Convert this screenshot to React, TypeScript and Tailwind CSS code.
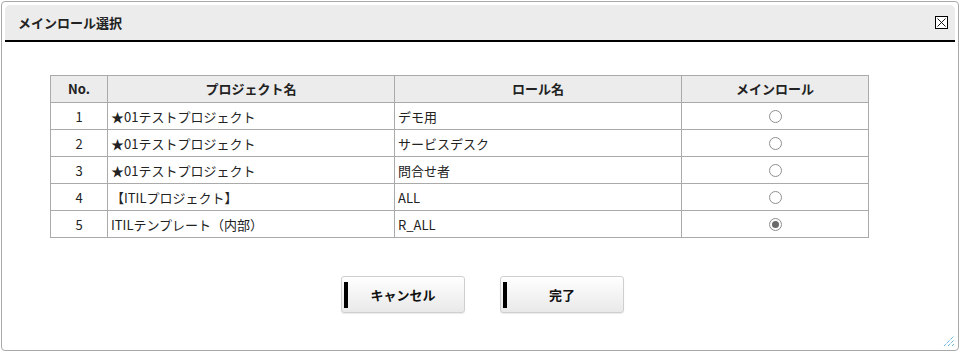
import React from "react";

const rows = [
  { no: 1, project: "★01テストプロジェクト", role: "デモ用", checked: false },
  { no: 2, project: "★01テストプロジェクト", role: "サービスデスク", checked: false },
  { no: 3, project: "★01テストプロジェクト", role: "問合せ者", checked: false },
  { no: 4, project: "【ITILプロジェクト】", role: "ALL", checked: false },
  { no: 5, project: "ITILテンプレート（内部）", role: "R_ALL", checked: true },
];

function Radio({ checked }: { checked: boolean }) {
  return (
    <span className="inline-flex w-[13px] h-[13px] rounded-full border border-[#8f8f8f] bg-white items-center justify-center align-middle">
      {checked && <span className="w-[7px] h-[7px] rounded-full bg-[#6b6b6b]" />}
    </span>
  );
}

function Btn({ label }: { label: string }) {
  return (
    <button className="relative w-[124px] h-[37px] rounded-[3px] border border-[#cfcfcf] bg-gradient-to-b from-[#ffffff] to-[#e9e9e9] text-[13px] font-bold text-[#111] shadow-[0_1px_1px_rgba(0,0,0,0.08)]">
      <span className="absolute left-[2px] top-[5px] w-[4px] h-[26px] bg-black" />
      {label}
    </button>
  );
}

export default function App() {
  return (
    <div
      className="w-[963px] h-[351px] bg-white pt-[1px] pl-[1px]"
      style={{ fontFamily: '"Noto Sans CJK JP", "Noto Sans", sans-serif' }}
    >
      <div className="w-[958px] h-[350px] border border-[#a9a9a9] rounded-[4px] bg-white p-[3px] flex flex-col relative">
        <div className="h-[37px] bg-[#ececec] rounded-t-[5px] border-b-2 border-black flex items-center justify-between pl-[13px] pr-[7px]">
          <span className="text-[13px] font-bold text-[#222] leading-none">メインロール選択</span>
          <span className="w-[13px] h-[13px] border border-black bg-white flex items-center justify-center">
            <svg width="11" height="11" viewBox="0 0 11 11">
              <path d="M1.5 1.5 L9.5 9.5 M9.5 1.5 L1.5 9.5" stroke="#000" strokeWidth="0.9" />
            </svg>
          </span>
        </div>

        <div className="pl-[45px] pt-[33px]">
          <table className="w-[819px] border-collapse text-[13px] text-[#222]">
            <thead>
              <tr className="h-[27px] bg-[#ececec]">
                <th className="w-[57px] border border-[#aaaaaa] font-bold">No.</th>
                <th className="w-[287px] border border-[#aaaaaa] font-bold">プロジェクト名</th>
                <th className="w-[287px] border border-[#aaaaaa] font-bold">ロール名</th>
                <th className="border border-[#aaaaaa] font-bold">メインロール</th>
              </tr>
            </thead>
            <tbody>
              {rows.map((r) => (
                <tr key={r.no} className="h-[27px]">
                  <td className="border border-[#aaaaaa] text-center leading-[25px] p-0">{r.no}</td>
                  <td className="border border-[#aaaaaa] pl-[3px] leading-[25px] p-0">{r.project}</td>
                  <td className="border border-[#aaaaaa] pl-[3px] leading-[25px] p-0">{r.role}</td>
                  <td className="border border-[#aaaaaa] text-center leading-none">
                    <Radio checked={r.checked} />
                  </td>
                </tr>
              ))}
            </tbody>
          </table>
        </div>

        <div className="flex justify-center gap-[35px] pt-[38px] pl-[5px]">
          <Btn label="キャンセル" />
          <Btn label="完了" />
        </div>

        <svg className="absolute right-[3px] bottom-[3px]" width="12" height="12" viewBox="0 0 12 12">
          <path d="M1 11 L11 1 M5 11 L11 5 M9 11 L11 9" stroke="#1d8fd6" strokeWidth="1" strokeDasharray="1 1" />
        </svg>
      </div>
    </div>
  );
}
